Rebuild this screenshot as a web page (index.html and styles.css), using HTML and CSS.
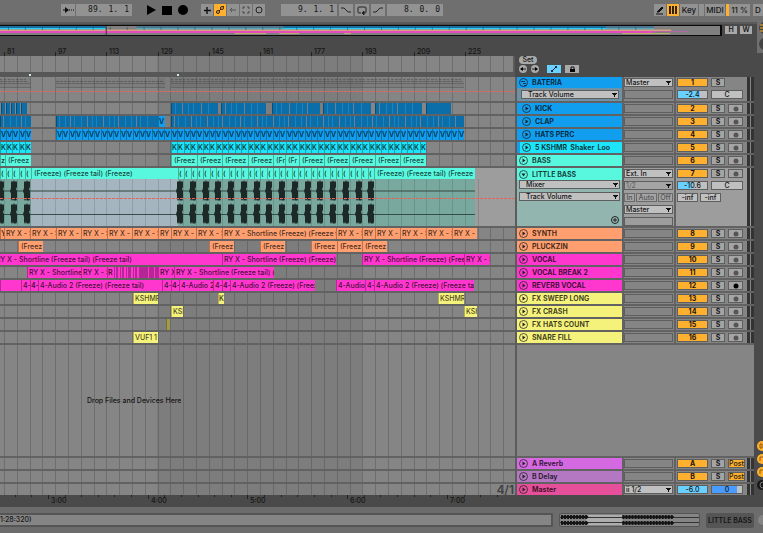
FILE: index.html
```html
<!DOCTYPE html>
<html lang="en">
<head>
<meta charset="utf-8">
<title>Arrangement</title>
<link rel="stylesheet" href="styles.css">
</head>
<body>
<header class="toolbar">
  <div class="group group-pos">
    <button class="tool wide" aria-label="Follow"><svg width="14" height="12"><path d="M2 6h5M8 6h1M10 6h1M12 6h1" stroke="#111"/><path d="M4 3l4 3-4 3z" fill="#111"/></svg></button>
    <div class="field"><span>89.</span><span>1.</span><span>1</span></div>
  </div>
  <div class="group transport">
    <button class="bare" aria-label="Play"><svg width="10" height="10"><path d="M1 0l9 5-9 5z"/></svg></button>
    <button class="bare" aria-label="Stop"><svg width="10" height="10"><path d="M0 1h10v9H0z"/></svg></button>
    <button class="bare" aria-label="Record"><svg width="10" height="10"><circle cx="5" cy="5" r="5"/></svg></button>
  </div>
  <div class="group group-edit">
    <button class="tool" aria-label="Overdub"><svg width="12" height="12"><path d="M6 3v7M3 6.5h7" stroke="#111" stroke-width="1.4"/></svg></button>
    <button class="tool on" aria-label="Automation arm"><svg width="12" height="12" fill="none" stroke="#332200"><circle cx="4" cy="8" r="1.5"/><circle cx="8" cy="4" r="1.5"/><path d="M5 7l2-2M2 9l1-1M9 3l1-1"/></svg></button>
    <button class="tool" aria-label="Re-enable automation"><svg width="12" height="12" stroke="#555" fill="none"><path d="M3 6h6M5 4L3 6l2 2"/></svg></button>
    <button class="tool" aria-label="Capture"><svg width="12" height="12" stroke="#444" fill="none"><path d="M3 5V3h2M7 3h2v2M9 7v2H7M5 9H3V7"/></svg></button>
    <button class="tool" aria-label="Session record"><svg width="12" height="12" stroke="#222" fill="none"><circle cx="6" cy="6" r="3"/></svg></button>
  </div>
  <div class="group group-loop">
    <div class="field"><span>9.</span><span>1.</span><span>1</span></div>
    <button class="tool wide" aria-label="Punch in"><svg width="14" height="12" stroke="#222" fill="none"><path d="M2 4h3l4 4h3"/></svg></button>
    <button class="tool wide" aria-label="Loop"><svg width="14" height="12" stroke="#222" fill="none"><path d="M6 9H4a1 1 0 0 1-1-1V4a1 1 0 0 1 1-1h6a1 1 0 0 1 1 1v4a1 1 0 0 1-1 1H8"/><path d="M9 7v4L7 9z" fill="#222"/></svg></button>
    <button class="tool wide" aria-label="Punch out"><svg width="14" height="12" stroke="#222" fill="none"><path d="M2 8h3l4-4h3"/></svg></button>
    <div class="field"><span>8.</span><span>0.</span><span>0</span></div>
  </div>
  <div class="group group-right">
    <button class="tool" aria-label="Draw"><svg width="12" height="12"><path d="M4 7l4-4 1 1-4 4-2 0z" fill="#111" stroke="#111"/><path d="M2 10h7" stroke="#111"/></svg></button>
    <button class="tool on" aria-label="Computer keyboard"><svg width="12" height="12"><path d="M2 2h8v8H2z" fill="#332200"/><path d="M4.5 2v8M7.5 2v8" stroke="#ffb02e"/></svg></button>
    <button class="tool key">Key</button>
    <div class="tool led"></div>
    <button class="tool midi">MIDI</button>
    <div class="tool cpu"><span>11 %</span></div>
    <button class="tool disk">D</button>
  </div>
</header>

<section class="overview">
  <svg id="overview" viewBox="0 0 722 9" preserveAspectRatio="none"></svg>
  <div class="hw"><button>H</button><button>W</button></div>
  <div class="edge"><svg width="6" height="31"><circle cx="8" cy="6" r="6" fill="#444"/><path d="M3 3h3M3 6h3M3 9h3" stroke="#ffb02e"/><circle cx="8" cy="22" r="6" fill="#444"/></svg></div>
</section>

<section class="rulers">
  <div class="ruler-left">
    <div class="lane beat-ruler" id="beats"></div>
    <div class="stack scrub"><svg class="gridlines"></svg></div>
    <div class="lane marks" id="marks-top"></div>
  </div>
  <div class="ruler-right">
    <button class="set">Set</button>
    <div class="locators">
      <button class="round" aria-label="Previous locator"><svg width="8" height="8"><path d="M2 4h5" stroke="#222"/><path d="M1 4l3-2v4z"/></svg></button>
      <button class="round" aria-label="Next locator"><svg width="8" height="8"><path d="M1 4h5" stroke="#222"/><path d="M7 4L4 2v4z"/></svg></button>
      <button class="mode blue" aria-label="Automation mode"><svg width="14" height="8"><path d="M5 6l4-4" stroke="#024"/><circle cx="5" cy="6" r="1"/><circle cx="9" cy="2" r="1"/></svg></button>
      <button class="mode" aria-label="Lock envelopes"><svg width="14" height="8"><path d="M5 4h5v3H5z"/><path d="M6 4V2h3v2" fill="none" stroke="#111"/></svg></button>
    </div>
  </div>
</section>

<main class="arrangement">
  <div class="stack timeline">
    <svg class="gridlines"></svg>
    <div class="lanes" id="lanes"></div>
  </div>
  <div class="headers" id="headers"></div>
  <div class="rail">
    <svg width="6" height="52"><circle cx="5" cy="6" r="5" fill="#ffb02e"/><circle cx="5" cy="19" r="5" fill="#ffb02e"/><circle cx="5" cy="32" r="5" fill="#ffb02e"/><circle cx="5" cy="45" r="5" fill="#181818"/><path d="M3 4h2v4H3zM3 21v-4h3M3 34v-4h3" stroke="#8a5a10" fill="none"/><path d="M6 42a3 3 0 0 0 0 6" stroke="#777" fill="none"/></svg>
  </div>
</main>

<div class="lane time-ruler" id="times"></div>

<footer class="status">
  <output class="message">1:28:320)</output>
  <div class="clip-view"><svg id="clipview" viewBox="0 0 138 12" preserveAspectRatio="none"></svg></div>
  <button class="selected-track">LITTLE BASS</button>
  <span class="knob"></span>
</footer>
<script src="app.js"></script>
</body>
</html>
```

FILE: styles.css
```css
* { box-sizing: border-box; }
body {
  margin: 0;
  min-height: 100vh;
  display: flex;
  flex-direction: column;
  overflow: hidden;
  background: #4a4a4a;
  color: #151515;
  font: 500 7px/9px Inter, "Liberation Sans", sans-serif;
}
svg { display: block; }
button, select, output { font: inherit; color: inherit; }
button { border: 0; padding: 0; margin: 0; text-align: center; }

/* Toolbar */
.toolbar { height: 22px; flex: none; display: flex; align-items: center; padding-bottom: 2px; background: #6f6f6f; }
.group { display: flex; align-items: center; flex: none; gap: 1px; }
.group-pos { margin-left: 61px; }
.transport { margin-left: 14px; gap: 6px; }
.group-edit { margin-left: 13px; }
.group-loop { margin-left: 16px; gap: 2px; }
.group-right { margin-left: auto; }
.tool { width: 12px; height: 12px; background: #929292; display: flex; align-items: center; justify-content: center; font-size: 8px; overflow: hidden; }
.tool.wide { width: 14px; }
.tool.on { background: #ffb02e; }
.tool.key { width: 18px; }
.tool.led { width: 5px; }
.tool.midi { width: 20px; }
.tool.cpu { width: 24px; border-left: 3px solid #ffb02e; }
.tool.disk { width: 10px; margin-left: 2px; }
.bare { background: none; width: 10px; }
.field { width: 56px; height: 12px; background: #929292; display: flex; justify-content: flex-end; gap: 6px; padding-right: 3px; font: 8px/12px "DejaVu Sans Mono", monospace; }

/* Overview */
.overview { flex: none; height: 31px; display: flex; align-items: flex-start; background: linear-gradient(#5a5a5a 2px, #4a4a4a 2px); }
.overview > svg { flex: 1; min-width: 0; height: 11px; margin-top: 3px; background: #808080; border: 1px solid #0a0a0a; border-left: 0; border-right-width: 2px; }
.hw { display: flex; gap: 3px; padding: 4px 5px 0 3px; }
.hw button { width: 12px; height: 8px; background: #a9a9a9; line-height: 8px; font-weight: 600; }
.edge { width: 6px; height: 31px; background: #6f6f6f; }

/* Rulers */
.rulers { flex: none; display: flex; height: 24px; }
.ruler-left { flex: 1; min-width: 0; margin-top: -8px; }
.lane { display: flex; overflow: hidden; min-width: 0; white-space: nowrap; }
.lane > * { flex: none; overflow: hidden; }
.beat-ruler { height: 11px; line-height: 8px; }
.beat-ruler .mark, .time-ruler .mark { padding-left: 2px; }
.beat-ruler .mark { border-left: 1px solid #222; height: 4px; margin-top: 7px; overflow: visible; line-height: 0; }
.scrub { height: 16px; border-right: 2px solid #5a5a5a; background: #858585; }
.marks { height: 5px; background: #575757; }
.flag { height: 2px; margin-top: 2px; background: #cfe6ee; }
.ruler-right { width: 248px; padding: 3px 4px 0; }
.set { display: block; width: 18px; height: 8px; border-radius: 4px; background: #a9a9a9; line-height: 8px; }
.locators { display: flex; margin-top: 1px; }
.round { width: 8px; height: 8px; border-radius: 4px; background: #a9a9a9; margin-right: 4px; }
.mode { width: 14px; height: 8px; background: #a9a9a9; margin-left: 4px; }
.mode.blue { background: #6ad0ff; }

/* Arrangement */
.arrangement { flex: 1; display: flex; min-height: 0; }
.stack { display: grid; min-width: 0; min-height: 0; }
.stack > * { grid-area: 1 / 1; min-width: 0; }
.gridlines { width: 100%; height: 100%; }
.timeline { flex: 1; background: #858585; border-right: 2px solid #5c5c5c; }
.lanes, .headers { display: flex; flex-direction: column; }
.row { flex: none; height: 13px; border-top: 2px solid #626262; }
.row.bateria { height: 24px; border-top: 0; }
.row.little { height: 60px; }
.row.empty { flex: 1; height: auto; min-height: 0; }
.lane.bateria > svg, .lane.little > svg { width: 100%; }
.lane.little { display: block; background: linear-gradient(90deg, transparent 475px, #9d9d9d 475px); }
.little .clips { display: flex; height: 11px; overflow: hidden; }
.little .clips > * { flex: none; overflow: hidden; }
.clip { height: 11px; padding-left: 1px; line-height: 11px; border-left: 1px solid rgba(0, 0, 0, .28); color: rgba(0, 0, 0, .75); }
.clip.paren { padding-left: 2px; }
.clip.tiny { font-weight: 600; padding-left: 0; }
.kick, .clap { background: #0b6ea8; }
.bright { background: #119eee; }
.hats { background: #119eee; }
.shaker { background: #1de4f8; }
.bass, .little .clip { background: #58f8df; }
.synth, .pluck { background: #ff9f70; }
.vocal, .break, .reverb { background: #ff37cf; }
.sweep, .crash, .snare { background: #f5f27c; }
.count { background: #a29b49; }
.drop { padding: 51px 0 0 87px; }
.signature { justify-content: flex-end; font-size: 12px; font-weight: 600; line-height: 11px; color: #404040; padding-right: 1px; }

/* Track headers */
.headers { width: 237px; flex: none; background: #858585; }
.head { display: grid; grid-template-columns: 105px 50px 1fr; gap: 2px; background: #626262; }
.head > div { background: #858585; min-height: 0; }
.head .name { display: flex; flex-direction: column; font-weight: 700; min-width: 0; }
.name .title { display: flex; align-items: center; gap: 4px; height: 11px; flex: none; padding-left: 2px; white-space: pre; color: rgba(0, 0, 0, .75); }
.head.child .name { border-left: 3px solid #119eee; }
.blue { background: #119eee; }
.cyan { background: #1de4f8; }
.aqua { background: #58f8df; }
.orange { background: #ff9f70; }
.pink { background: #ff37cf; }
.yellow { background: #f5f27c; }
.violet { background: #d569e2; }
.plum { background: #b478c3; }
.rose { background: #e6509b; }
.bateria > .name { background: #6f91a6; }
.little > .name { background: #93b5b0; }
.little > .name .title { height: 12px; }
.head.little > div:not(.name) { background: #9d9d9d; }
select {
  appearance: none;
  display: block;
  width: 49px;
  height: 9px;
  margin: 1px 0 3px;
  padding: 0 8px 0 1px;
  border: 1px solid #5e5e5e;
  border-radius: 0;
  background: #c0c0c0 conic-gradient(from -30deg at 50% 100%, #111 60deg, transparent 60deg) no-repeat right 1px center / 5px 4px;
  font-weight: 500;
  font-size: 7px;
  line-height: 7px;
}
.name select { flex: none; width: 101px; margin: 0 0 3px 2px; padding-left: 6px; }
.bateria .name select { width: 98px; margin: 2px 0 0 4px; }
select.dim { background-color: #a4a4a4; color: #666; }
.slot { height: 9px; margin: 1px 1px 0 0; border: 1px solid #5e5e5e; }
.io select:last-child { margin-bottom: 0; }
.monitor { display: flex; gap: 1px; margin: 0 1px 3px 0; }
.monitor button { flex: 1 0 auto; height: 9px; border: 1px solid #6a6a6a; background: #a4a4a4; color: #555; line-height: 7px; }
.add { align-self: flex-end; margin: auto 3px 2px 0; width: 8px; height: 8px; background: none; }
.mix { display: grid; grid-template-columns: 1fr 7px; }
.strip { padding: 1px 0 0 1px; }
.controls { display: flex; gap: 3px; height: 9px; margin-bottom: 3px; }
.controls:last-child { margin-bottom: 0; }
.controls > * { height: 9px; border: 1px solid #5e5e5e; line-height: 7px; text-align: center; overflow: hidden; flex: none; background: #a5a5a5; }
.controls .num { width: 31px; background: #ffb02e; font-weight: 700; }
.controls .solo { width: 14px; font-weight: 700; }
.controls .arm { width: 15px; display: flex; align-items: center; justify-content: center; }
.controls .post { width: 17px; background: #ffb02e; }
.controls .vol { width: 31px; background: linear-gradient(90deg, #6ad0ff 75%, #c0c0c0 75%); }
.controls .vol.low { background: linear-gradient(90deg, #6ad0ff 50%, #c0c0c0 50%); }
.controls .vol.full { background: #6ad0ff; }
.controls .pan { width: 32px; background: #c0c0c0; }
.controls .cue { background: linear-gradient(90deg, #489cff 85%, #c0c0c0 85%); }
.controls .send { width: 21px; background: #c0c0c0; margin-right: -1px; }
.meter { background: linear-gradient(90deg, #333 3px, transparent 3px, transparent 4px, #333 4px); }
.rail { width: 9px; flex: none; padding-left: 3px; display: flex; align-items: flex-end; }
.rail svg { margin-bottom: 3px; }

/* Time ruler and status bar */
.time-ruler { flex: none; height: 12px; }
.time-ruler .tick { border-left: 1px solid #222; height: 2px; }
.time-ruler .mark { border-left: 1px solid #222; height: 4px; overflow: visible; line-height: 11px; }
.status { flex: none; height: 26px; display: flex; align-items: center; background: #6c6c6c; }
.message { flex: 1; height: 14px; border: 2px solid #555; border-left: 0; border-radius: 0 2px 2px 0; background: #858585; line-height: 10px; margin-right: 6px; }
.clip-view { width: 141px; height: 14px; border: 1px solid #555; border-radius: 2px; background: #858585; }
.clip-view svg { width: 100%; height: 12px; }
.selected-track { width: 48px; height: 15px; border-radius: 2px; background: #555; margin: 0 4px 0 6px; font-weight: 600; white-space: nowrap; }
.knob { width: 5px; height: 10px; border-radius: 5px 0 0 5px; background: #858585; }
```

FILE: app.js
```js
const NS = 'http://www.w3.org/2000/svg';
const byId = id => document.getElementById(id);

function shape(svg, tag, attrs) {
  const el = document.createElementNS(NS, tag);
  for (const key in attrs) el.setAttribute(key, attrs[key]);
  svg.appendChild(el);
}
const rect = (svg, x, y, width, height, fill, opacity = 1) =>
  shape(svg, 'rect', { x, y, width, height, fill, opacity });

// Places [start, end, label] items one after another with gaps between them.
function place(lane, items, cls) {
  let at = 0;
  for (const [start, end, label = '', extra = ''] of items) {
    const el = document.createElement('div');
    el.className = `${cls} ${extra} ${label.startsWith('(') ? 'paren' : ''} ${end - start < 9 ? 'tiny' : ''}`.trim();
    el.textContent = label;
    el.style.width = `${end - start}px`;
    if (start !== at) el.style.marginLeft = `${start - at}px`;
    lane.appendChild(el);
    at = end;
  }
}

// Same label repeated every two bars.
function repeat(start, end, label) {
  const out = [];
  const n = Math.round((end - start) / 6.4);
  for (let i = 0; i < n; i++) {
    out.push([Math.round(start + i * (end - start) / n), Math.round(start + (i + 1) * (end - start) / n), label]);
  }
  return out;
}
// Clips between consecutive boundaries; narrow ones take the short label.
const chain = (points, label, short) =>
  points.slice(1).map((p, i) => [points[i], p, p - points[i] < 18 ? short : label]);

document.querySelectorAll('.gridlines').forEach(svg => {
  rect(svg, 157, 0, 205, '100%', '#000', 0.06);
  for (let i = 0; i < 120; i++) {
    const x = Math.round(4 + i * 12.8);
    rect(svg, x, 0, 1, '100%', '#000', 0.17);
  }
});

const bars = [];
for (let i = 0; i < 10; i++) bars.push([Math.round(4 + i * 51.2), Math.round(4 + i * 51.2) + 30, String(81 + i * 16)]);
place(byId('beats'), bars, 'mark');
place(byId('marks-top'), [[29, 31], [177, 179]], 'flag');

const times = [];
for (let i = 0; i < 31; i++) {
  const x = Math.round(-2 + i * 16.63);
  const minute = i % 6 === 3;
  times.push([x, x + (minute ? 16 : 2), minute ? `${3 + (i - 3) / 6}:00` : '', minute ? 'mark' : 'tick']);
}
place(byId('times'), times, '');

const R = 'RY X - S';
const S = 'RY X - Shortline';
const F = '(Freeze)';
const T = '(Freeze tail)';
const tracks = [
  { cls: 'bateria', name: 'BATERIA', color: 'blue', num: 1 },
  { cls: 'kick', name: 'KICK', color: 'blue', num: 2, child: true, stripes: 5,
    clips: [[1, 5], [6, 10], [11, 15], [16, 20], [21, 27], [171, 218], [221, 266], [272, 320], [323, 371], [375, 422], [426, 451]] },
  { cls: 'clap', name: 'CLAP', color: 'blue', num: 3, child: true, stripes: 4,
    clips: [[0, 31], [56, 158], [158, 165, 'V', 'bright'], [171, 464]] },
  { cls: 'hats', name: 'HATS PERC', color: 'blue', num: 4, child: true,
    clips: [...repeat(0, 31, 'V'), ...repeat(56, 464, 'V')] },
  { cls: 'shaker', name: '5 KSHMR  Shaker  Loo', color: 'cyan', num: 5, child: true,
    clips: [...repeat(0, 31, 'K'), ...repeat(171, 426, 'K')] },
  { cls: 'bass', name: 'BASS', color: 'aqua', num: 6,
    clips: [[0, 5, 'z'], [5, 31, '(Freez'], ...chain([171, 197, 222, 248, 273, 285, 299, 324, 349, 375, 400, 426], '(Freez', '(Fr')] },
  { cls: 'little', name: 'LITTLE BASS', color: 'aqua', num: 7,
    clips: [...repeat(0, 31, '('), [31, 178, `${F} ${T} ${F}`], ...repeat(178, 374, '('), [374, 475, `${F} ${T} (Freeze`]] },
  { cls: 'synth', name: 'SYNTH', color: 'orange', num: 8,
    clips: [[0, 4, 'Y'], ...chain([4, 30, 56, 81, 107, 132, 158, 171, 196, 222], R, 'RY'), [222, 336, `${S} ${F} (Freeze t`], ...chain([336, 362, 375, 400, 426, 452, 477], R, 'RY')] },
  { cls: 'pluck', name: 'PLUCKZIN', color: 'orange', num: 9,
    clips: [[18, 43], [209, 234], [260, 285], [311, 337], [337, 362], [362, 387]].map(c => [...c, '(Freez']) },
  { cls: 'vocal', name: 'VOCAL', color: 'pink', num: 10,
    clips: [[-6, 222, `${S} ${T} ${T}`], [222, 336, `${S} ${F} ${F}`], [362, 464, `${S} ${F} (Free`], [464, 490, R]] },
  { cls: 'break', name: 'VOCAL BREAK 2', color: 'pink', num: 11,
    clips: [[27, 81, S], [81, 107, R], [107, 114, 'R'], [114, 158, '', 'cuts'], [158, 174, 'RY X'], [174, 274, `${S} ${T} (`]] },
  { cls: 'reverb', name: 'REVERB VOCAL', color: 'pink', num: 12, armed: true,
    clips: [[0, 21], [21, 30, '4-'], [30, 38, '4-'], [38, 162, `4-Audio 2 ${F} ${T}`], [162, 171, '4-'], [171, 179, '4-'], [179, 213, '4-Audio 2'], [213, 222, '4-'], [222, 230, '4-'], [230, 315, `4-Audio 2 ${F} (Freez`], [336, 365, '4-Audio'], [365, 374, '4-'], [374, 474, `4-Audio 2 ${F} (Freeze tai`]] },
  { cls: 'sweep', name: 'FX SWEEP LONG', color: 'yellow', num: 13, clips: [[133, 158, 'KSHMR'], [218, 224, 'K'], [438, 464, 'KSHMR']] },
  { cls: 'crash', name: 'FX CRASH', color: 'yellow', num: 14, clips: [[171, 183, 'KSH'], [464, 477, 'KSH']] },
  { cls: 'count', name: 'FX HATS COUNT', color: 'yellow', num: 15, clips: [[166, 170]] },
  { cls: 'snare', name: 'SNARE FILL', color: 'yellow', num: 16, clips: [[133, 158, 'VUF1 1']] },
  { cls: 'empty' },
  { cls: 'return', name: 'A Reverb', color: 'violet', num: 'A', post: true },
  { cls: 'return', name: 'B Delay', color: 'plum', num: 'B', post: true },
  { cls: 'signature', name: 'Master', color: 'rose', master: true }
];

function stripes(lane, step) {
  lane.querySelectorAll('.clip').forEach((clip, n) => {
    const width = parseInt(clip.style.width, 10);
    if (width < 30) return;
    const svg = document.createElementNS(NS, 'svg');
    svg.setAttribute('width', width);
    svg.setAttribute('height', 11);
    for (let x = step, i = n; x < width - 4; i++, x += step + (i * 7) % 4) {
      rect(svg, x - 3, 0, 1, 11, i % 3 ? '#2d9fe0' : '#7d8890', i % 3 ? 0.45 : 0.8);
    }
    clip.appendChild(svg);
  });
}

// Miniature of the grouped clips, with its volume envelope.
function groupMini(lane) {
  const svg = document.createElementNS(NS, 'svg');
  svg.setAttribute('height', 24);
  for (const [a, b] of [[0, 31], [56, 165], [171, 464]]) {
    rect(svg, a, 1, b - a, 10, '#000', 0.06);
    rect(svg, a, 6, b - a, 1, '#444', 0.4);
    rect(svg, a, 10, b - a, 1, '#444', 0.35);
    for (let x = a; x < b - 3; x += 4) {
      if (a !== 56) rect(svg, x, 2, 2 + x % 3 / 2, 1, '#333', 0.35);
      rect(svg, x, 4, 3, 1, '#333', 0.4);
    }
  }
  shape(svg, 'path', { d: 'M0 14.5H2000', stroke: '#e0675d', 'stroke-dasharray': '3 1' });
  lane.appendChild(svg);
}

function waveform(lane) {
  const svg = document.createElementNS(NS, 'svg');
  svg.setAttribute('height', 47);
  rect(svg, 0, 0, 475, 47, '#79a89f');
  rect(svg, 31, 0, 147, 47, '#a4b5bf');
  for (let i = 0; i < 38; i++) rect(svg, Math.round(4 + i * 12.8), 0, 1, 47, '#000', 0.12);
  rect(svg, 0, 11, 475, 2, '#415650', 0.6);
  rect(svg, 0, 35, 475, 1, '#2e423d', 0.9);
  const starts = [-2, 11, 24];
  for (let i = 0; i < 16; i++) starts.push(Math.round(177 + i * 12.75));
  for (const x of starts) {
    for (const y of [2, 25]) {
      shape(svg, 'path', {
        d: `M${x - 1} ${y + 10}l1-3v-6l1-1 1 1 1-2 1 2 1-1 1 1v5l-1 2 1 2v8l-1 2-1-1-1 1-1-2-1 2-1-2v-5z`, fill: '#1c2926'
      });
    }
  }
  shape(svg, 'path', { d: 'M0 19.5H2000', stroke: '#e0675d', 'stroke-dasharray': '3 1' });
  lane.appendChild(svg);
}

const fold = down => `<svg width="9" height="9" fill="none" stroke="#222" stroke-opacity=".75"><circle cx="4.5" cy="4.5" r="4"/><path d="${down ? 'M2.5 3.5h4l-2 3z' : 'M3.5 2.5v4l3-2z'}" fill="#222" stroke="none"/></svg>`;
const groupIcon = '<svg width="9" height="9" fill="none" stroke="#123" stroke-opacity=".8"><circle cx="4.5" cy="4.5" r="4"/><path d="M2 3.5h4M4 5.5h3M5 7.5h2"/></svg>';
const select = (label, cls = '') => `<select class="${cls}" aria-label="${label}"><option>${label}</option></select>`;
const slot = '<div class="slot"></div>';
const arm = on => `<button class="arm" aria-label="Arm"><svg width="6" height="6"><circle cx="3" cy="3" r="2.5" fill="${on ? '#000' : '#555'}"/></svg></button>`;

function header(t) {
  const icon = t.num === 1 ? groupIcon : fold(t.num === 7);
  let under = '', io = slot;
  let strip = `<div class="controls"><button class="num">${t.num}</button><button class="solo">S</button>${t.num === 1 ? '' : t.post ? '<button class="post">Post</button>' : arm(t.armed)}</div>`;
  if (t.num === 1) {
    under = select('Track Volume');
    io = select('Master') + slot;
    strip += '<div class="controls"><div class="vol">-2.4</div><div class="pan">C</div></div>';
  }
  if (t.num === 7) {
    under = select('Mixer') + select('Track Volume') + '<button class="add" aria-label="Add lane"><svg width="8" height="8" fill="none" stroke="#222"><circle cx="4" cy="4" r="3.5"/><path d="M4 2v4M2 4h4"/></svg></button>';
    io = select('Ext. In') + select('1/2', 'dim') + '<div class="monitor"><button>In</button><button>Auto</button><button>Off</button></div>' + select('Master') + slot;
    strip += '<div class="controls"><div class="vol low">-10.6</div><div class="pan">C</div></div><div class="controls"><div class="send">-inf</div><div class="send">-inf</div></div>';
  }
  if (t.master) {
    io = select('ⅱ 1/2');
    strip = '<div class="controls"><div class="vol full">-6.0</div><div class="pan cue">0</div></div>';
  }
  return `<div class="name"><div class="title ${t.color}">${icon}<span>${t.name}</span></div>${under}</div><div class="io">${io}</div><div class="mix"><div class="strip">${strip}</div><div class="meter"></div></div>`;
}

for (const t of tracks) {
  const lane = document.createElement('div');
  lane.className = `lane row ${['bateria', 'little', 'empty', 'signature'].includes(t.cls) ? t.cls : ''}`;
  let target = lane;
  if (t.cls === 'little') {
    target = document.createElement('div');
    target.className = 'clips';
    lane.appendChild(target);
  }
  if (t.clips) place(target, t.clips, `clip ${t.cls === 'little' ? '' : t.cls}`);
  if (t.stripes) stripes(lane, t.stripes);
  if (t.cls === 'bateria') groupMini(lane);
  if (t.cls === 'little') waveform(lane);
  if (t.cls === 'empty') lane.innerHTML = '<span class="drop">Drop Files and Devices Here</span>';
  if (t.master) lane.innerHTML = '<span>4/1</span>';
  byId('lanes').appendChild(lane);

  const head = document.createElement('div');
  head.className = `row ${t.name ? 'head' : 'empty'} ${t.child ? 'child' : ''} ${t.num === 1 ? 'bateria' : t.num === 7 ? 'little' : ''}`;
  if (t.name) head.innerHTML = header(t);
  byId('headers').appendChild(head);
}

const cuts = document.querySelector('.cuts');
const cutSvg = document.createElementNS(NS, 'svg');
cutSvg.setAttribute('width', 44);
cutSvg.setAttribute('height', 11);
for (const [x, w] of [[0, 2], [4, 1], [6, 2], [10, 1], [12, 3], [17, 1], [19, 2], [23, 9], [33, 5], [39, 3]]) rect(cutSvg, x, 0, w, 11, '#8e1f76', 0.65);
cuts.appendChild(cutSvg);

const ov = byId('overview');
for (const [a, b, o] of [[0, 106, 1], [137, 284, 0.5], [284, 608, 1], [608, 656, 0.5]]) {
  rect(ov, a, 0, b - a, 2, '#1b6e9e', o);
  rect(ov, a, 2, b - a, 1.5, '#20d0f5', o);
}
rect(ov, 0, 3.5, 673, 1.5, '#e9a380', 0.85);
rect(ov, 0, 5, 655, 2, '#f046c4', 0.9);
rect(ov, 655, 5, 34, 1, '#c060b0', 0.8);
for (const [a, b] of [[235, 267], [280, 300], [345, 352], [624, 672]]) rect(ov, a, 7, b - a, 1, '#c9b866', 0.8);
for (let x = 8; x < 640; x += 17) rect(ov, x, 1, 1, 3, '#124a66', 0.5);
rect(ov, 106, 0, 1, 9, '#333');

const cv = byId('clipview');
rect(cv, 26, 1, 36, 10, '#adadad');
rect(cv, 0, 3, 138, 1, '#333');
rect(cv, 0, 8, 138, 1, '#333');
for (const [a, b] of [[1, 26], [62, 112]]) {
  for (let x = a; x < b; x += 3) {
    rect(cv, x, 1, 2, 4, '#151515');
    rect(cv, x, 7, 2, 4, '#151515');
    rect(cv, x, 2, 3, 2, '#151515');
    rect(cv, x, 8, 3, 2, '#151515');
  }
}
```
